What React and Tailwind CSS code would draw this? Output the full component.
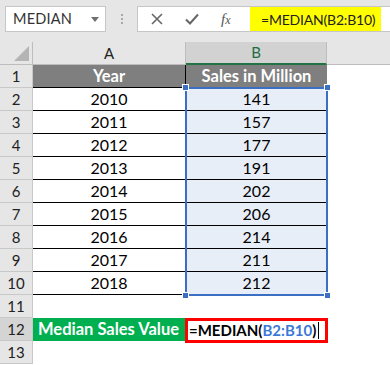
import React from "react";

const years = [2010, 2011, 2012, 2013, 2014, 2015, 2016, 2017, 2018];
const sales = [141, 157, 177, 191, 202, 206, 214, 211, 212];

function RowHead({ n, selected }) {
  return (
    <div
      className={
        "h-[23px] flex items-center justify-center border-r border-b border-[#c8c8c8] text-[15px] " +
        (selected ? "bg-[#d4d4d4] text-[#222]" : "bg-[#e6e6e6] text-[#222]")
      }
    >
      {n}
    </div>
  );
}

export default function App() {
  return (
    <div
      className="w-[390px] h-[365px] overflow-hidden bg-white relative"
      style={{ fontFamily: "Lato, 'Open Sans', sans-serif" }}
    >
      {/* Toolbar */}
      <div className="h-[42px] bg-[#e6e6e6] flex items-start pt-[6px]">
        <div className="ml-[5px] w-[101px] h-[26px] bg-white border border-[#c6c6c6] flex items-center pl-[7px] pr-[6px]">
          <span className="text-[14.5px] text-[#333] flex-1 tracking-[0.2px]">MEDIAN</span>
          <svg width="8" height="5" viewBox="0 0 8 5">
            <path d="M0 0 L8 0 L4 5 Z" fill="#707070" />
          </svg>
        </div>
        <div className="w-[31px] flex flex-col items-center gap-[2px] pt-[8px]">
          <div className="w-[2px] h-[2px] bg-[#a8a8a8]" />
          <div className="w-[2px] h-[2px] bg-[#a8a8a8]" />
          <div className="w-[2px] h-[2px] bg-[#a8a8a8]" />
        </div>
        <div className="flex-1 h-[26px] bg-white border border-[#c6c6c6] border-r-0 flex items-stretch">
          <div className="w-[112px] flex items-center">
            <svg width="12" height="12" viewBox="0 0 12 12" className="ml-[13px]">
              <path d="M1 1 L11 11 M11 1 L1 11" stroke="#666" strokeWidth="1.6" />
            </svg>
            <svg width="14" height="12" viewBox="0 0 14 12" className="ml-[22px]">
              <path d="M1 6.5 L5 10.5 L13 1.5" stroke="#666" strokeWidth="2" fill="none" />
            </svg>
            <span
              className="ml-[22px] text-[15px] italic text-[#555]"
              style={{ fontFamily: "'Liberation Serif', serif" }}
            >
              f<span className="text-[12px]">x</span>
            </span>
          </div>
          <div className="w-[131px] bg-[#ffff00] flex items-center pl-[11px] text-[14px] tracking-[-0.2px] text-[#222] whitespace-nowrap">
            =MEDIAN(B2:B10)
          </div>
        </div>
      </div>

      {/* Grid */}
      <div className="grid grid-cols-[33px_153px_141px_1fr]">
        {/* Column header row */}
        <div className="h-[23px] bg-[#e6e6e6] border-r border-b border-[#bdbdbd] flex items-end justify-end pr-[3px] pb-[3px]">
          <svg width="15" height="15" viewBox="0 0 15 15">
            <path d="M15 0 L15 15 L0 15 Z" fill="#b4b4b4" />
          </svg>
        </div>
        <div className="h-[23px] bg-[#e6e6e6] border-r border-b border-[#bdbdbd] flex items-center justify-center text-[15px] text-[#222]">
          A
        </div>
        <div className="h-[23px] bg-[#d2d2d2] border-r border-[#bdbdbd] border-b-2 border-b-[#217346] flex items-center justify-center text-[15px] text-[#1e6b43]">
          B
        </div>
        <div className="h-[23px] bg-[#e6e6e6] border-b border-[#bdbdbd]" />

        {/* Row 1 */}
        <RowHead n={1} />
        <div className="h-[23px] bg-[#7f7f7f] border-r border-b border-black flex items-center justify-center text-[16.5px] font-bold text-white">
          Year
        </div>
        <div className="h-[23px] bg-[#7f7f7f] border-b border-black flex items-center justify-center text-[16.5px] font-bold text-white">
          Sales in Million
        </div>
        <div className="h-[23px]" />

        {years.map((y, i) => (
          <React.Fragment key={y}>
            <RowHead n={i + 2} />
            <div className="h-[23px] border-r border-b border-black flex items-center justify-center text-[16px] text-black">
              {y}
            </div>
            <div className="h-[23px] bg-[#e8eef8] border-b border-black flex items-center justify-center text-[16px] text-black">
              {sales[i]}
            </div>
            <div className="h-[23px]" />
          </React.Fragment>
        ))}

        {/* Row 11 */}
        <RowHead n={11} />
        <div className="h-[23px]" />
        <div className="h-[23px]" />
        <div className="h-[23px]" />

        {/* Row 12 */}
        <RowHead n={12} selected />
        <div className="h-[23px] bg-[#00b050] flex items-center pl-[5px] text-[16.5px] font-bold text-white">
          Median Sales Value
        </div>
        <div className="h-[23px] relative">
          <div className="absolute left-[-1px] top-0 w-[143px] h-[25px] border-[3px] border-[#ff0000] flex items-center pl-[1px] text-[15px] font-bold text-black bg-white whitespace-nowrap">
            <span>=MEDIAN(</span>
            <span className="text-[#3c78d8]">B2:B10</span>
            <span>)</span>
            <span className="ml-[2px] w-[1px] h-[17px] bg-black" />
          </div>
        </div>
        <div className="h-[23px]" />

        {/* Row 13 */}
        <RowHead n={13} />
        <div className="h-[23px]" />
        <div className="h-[23px]" />
        <div className="h-[23px]" />
      </div>

      {/* Selection overlay B2:B10 */}
      <div className="absolute left-[185px] top-[87px] w-[143px] h-[209px] border-2 border-[#3a6fc4] pointer-events-none" />
      <div className="absolute left-[182px] top-[84px] w-[7px] h-[7px] bg-[#3a6fc4] border border-white" />
      <div className="absolute left-[324px] top-[84px] w-[7px] h-[7px] bg-[#3a6fc4] border border-white" />
      <div className="absolute left-[182px] top-[292px] w-[7px] h-[7px] bg-[#3a6fc4] border border-white" />
      <div className="absolute left-[324px] top-[292px] w-[7px] h-[7px] bg-[#3a6fc4] border border-white" />
    </div>
  );
}
